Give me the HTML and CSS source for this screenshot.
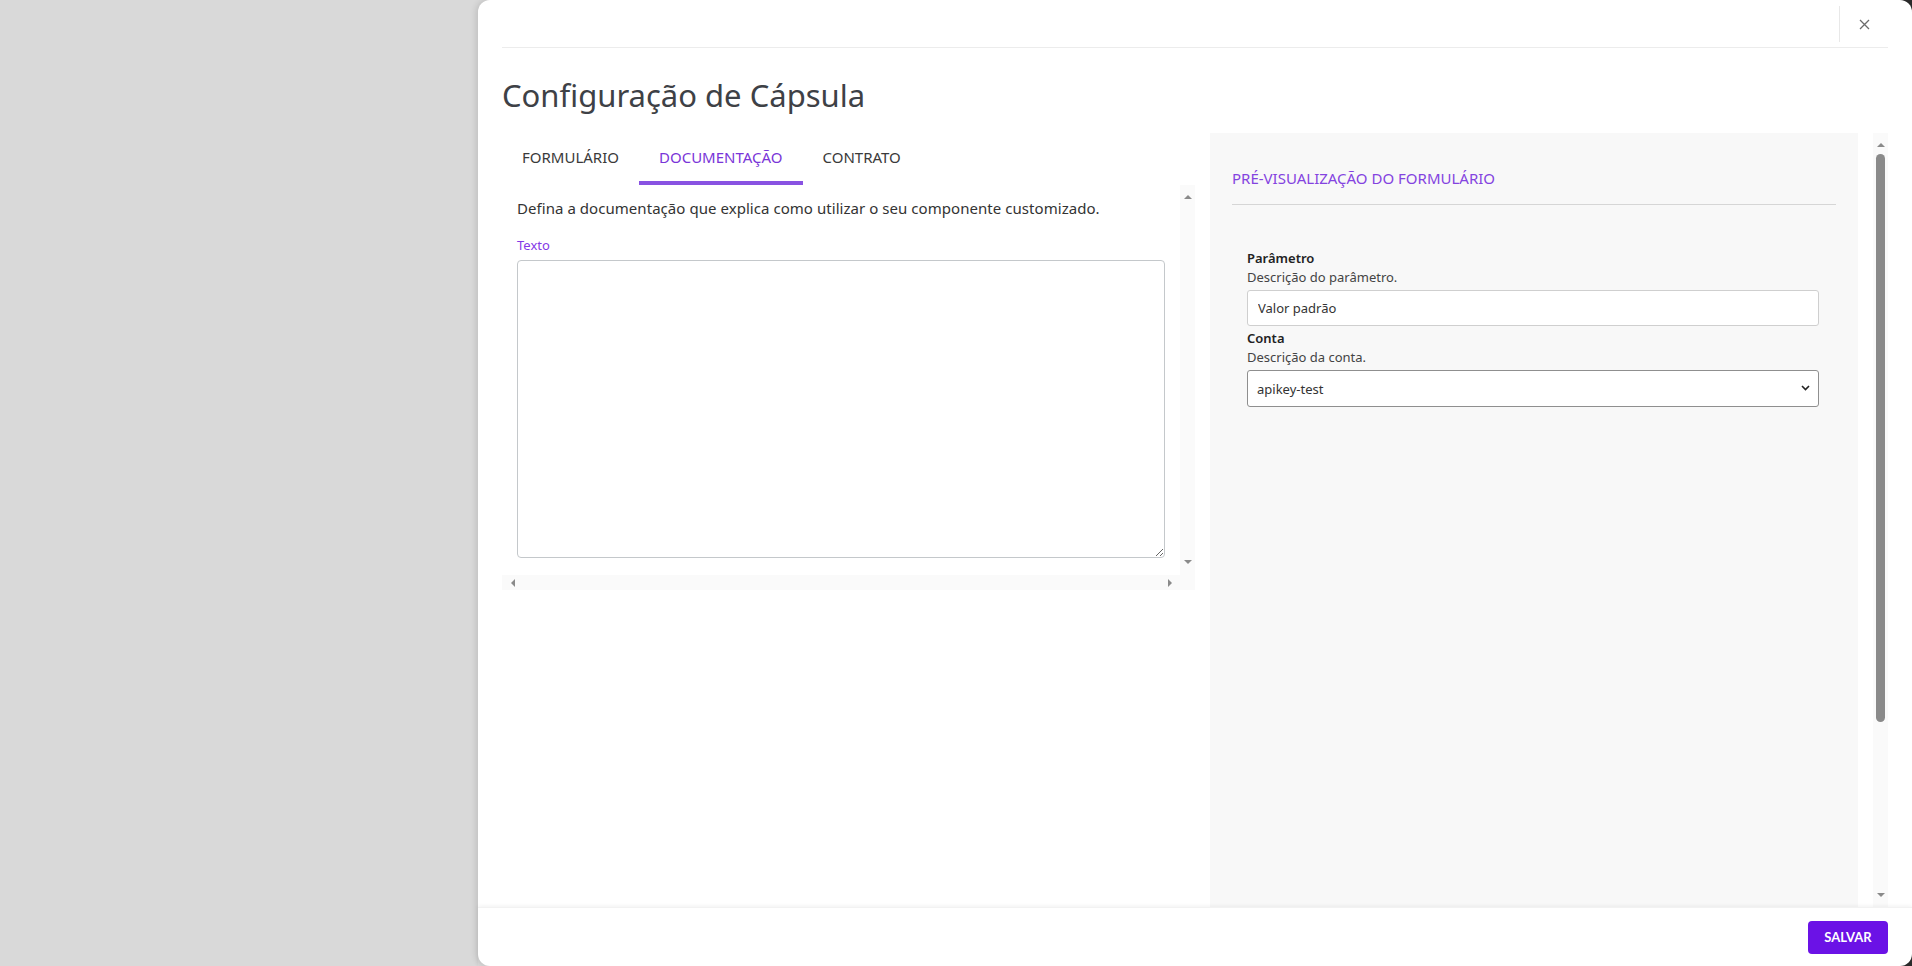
FILE: index.html
```html
<!DOCTYPE html>
<html lang="pt-BR">
<head>
<meta charset="UTF-8">
<meta name="viewport" content="width=device-width, initial-scale=1.0">
<title>Configuração de Cápsula</title>
<link rel="stylesheet" href="styles.css">
</head>
<body>
<div class="modal">
    <header class="modal-header">
        <button class="close-btn" title="Fechar">
            <svg width="11" height="11" viewBox="0 0 11 11"><path d="M1 1L10 10M10 1L1 10" stroke="#6b6b6b" stroke-width="1.3" fill="none"/></svg>
        </button>
    </header>
    <h1 class="modal-title">Configuração de Cápsula</h1>
    <div class="modal-body">
        <section class="editor">
            <nav class="tabs">
                <button class="tab">FORMULÁRIO</button>
                <button class="tab active">DOCUMENTAÇÃO</button>
                <button class="tab">CONTRATO</button>
            </nav>
            <div class="tab-panel">
                <div class="tab-content">
                    <p class="tab-hint">Defina a documentação que explica como utilizar o seu componente customizado.</p>
                    <label class="field-label" for="doc-text">Texto</label>
                    <textarea id="doc-text" class="doc-text"></textarea>
                </div>
                <div class="vbar">
                    <span class="arrow arrow-up"></span>
                    <span class="arrow arrow-down"></span>
                </div>
                <div class="hbar">
                    <span class="arrow arrow-left"></span>
                    <span class="arrow arrow-right"></span>
                </div>
                <div class="bar-corner"></div>
            </div>
        </section>
        <aside class="preview">
            <h2 class="preview-title">PRÉ-VISUALIZAÇÃO DO FORMULÁRIO</h2>
            <div class="preview-form">
                <div class="form-field">
                    <label class="form-label">Parâmetro</label>
                    <div class="form-help">Descrição do parâmetro.</div>
                    <input class="form-input" type="text" value="Valor padrão">
                </div>
                <div class="form-field">
                    <label class="form-label">Conta</label>
                    <div class="form-help">Descrição da conta.</div>
                    <div class="select-wrap">
                        <select class="form-select">
                            <option>apikey-test</option>
                        </select>
                        <svg class="select-caret" width="9" height="6" viewBox="0 0 9 6"><path d="M1 1L4.5 4.5L8 1" stroke="#222" stroke-width="1.6" fill="none"/></svg>
                    </div>
                </div>
            </div>
        </aside>
        <div class="body-scrollbar">
            <span class="arrow arrow-up"></span>
            <div class="thumb-track"><div class="thumb"></div></div>
            <span class="arrow arrow-down"></span>
        </div>
    </div>
    <footer class="modal-footer">
        <button class="save-btn">SALVAR</button>
    </footer>
</div>
</body>
</html>
```

FILE: styles.css
```css
html, body {
    height: 100%;
}
body {
    margin: 0;
    font-family: 'Noto Sans', Arial, sans-serif;
    color: #333;
    background: linear-gradient(90deg, #d9d9d9 0 1890px, #2b2b2b 1890px);
    overflow: hidden;
}
.modal {
    margin-left: 478px;
    height: 966px;
    background-color: #fff;
    border-radius: 12px;
    box-shadow: -2px 0 6px rgba(0, 0, 0, 0.12);
    display: flex;
    flex-direction: column;
}
.modal-header {
    height: 47px;
    margin: 0 24px;
    border-bottom: 1px solid #ececec;
    display: flex;
    justify-content: flex-end;
    align-items: flex-start;
}
.close-btn {
    width: 49px;
    height: 36px;
    margin-top: 6px;
    border: none;
    border-left: 1px solid #e8e8e8;
    background: none;
    padding: 0;
    display: flex;
    align-items: center;
    justify-content: center;
    cursor: pointer;
}
.modal-title {
    margin: 0 24px;
    padding: 27px 0 18px;
    font-size: 31px;
    line-height: 40px;
    font-weight: 400;
    color: #3e4146;
}
.modal-body {
    flex: 1;
    min-height: 0;
    margin: 0 24px;
    display: flex;
    gap: 15px;
    overflow: hidden;
}
.editor {
    flex: 0 0 693px;
}
.tabs {
    display: flex;
}
.tab {
    font-family: 'Noto Sans', Arial, sans-serif;
    font-size: 15px;
    line-height: 24px;
    padding: 12px 20px 12px;
    border: none;
    border-bottom: 4px solid transparent;
    background: none;
    color: #3a3a3a;
    cursor: pointer;
}
.tab.active {
    color: #7a35d8;
    border-bottom-color: #8952e2;
}

/* tab panel with its scrollbars */
.tab-panel {
    display: grid;
    grid-template-columns: 678px 15px;
    grid-template-rows: 390px 15px;
}
.tab-content {
    padding: 11px 15px 0;
    overflow: hidden;
}
.tab-hint {
    margin: 0;
    font-size: 15px;
    line-height: 24px;
    letter-spacing: 0.05px;
    color: #333;
}
.field-label {
    display: block;
    margin-top: 15px;
    font-size: 13px;
    line-height: 20px;
    color: #8439e6;
}
.doc-text {
    display: block;
    margin-top: 5px;
    width: 648px;
    height: 298px;
    box-sizing: border-box;
    border: 1px solid #c4c8cb;
    border-radius: 4px;
    font-family: 'Noto Sans', Arial, sans-serif;
}
.vbar, .hbar, .bar-corner, .body-scrollbar {
    background-color: #fafafa;
}
.vbar {
    display: flex;
    flex-direction: column;
    justify-content: space-between;
    align-items: center;
    padding: 10px 0 11px;
}
.hbar {
    display: flex;
    justify-content: space-between;
    align-items: center;
    padding: 0 8px 0 9px;
}
.arrow {
    width: 0;
    height: 0;
    border: 4px solid transparent;
}
.arrow-up {
    border-top: none;
    border-bottom-color: #8a8a8a;
}
.arrow-down {
    border-bottom: none;
    border-top-color: #8a8a8a;
}
.arrow-left {
    border-left: none;
    border-right-color: #8a8a8a;
}
.arrow-right {
    border-right: none;
    border-left-color: #8a8a8a;
}

/* preview */
.preview {
    flex: 1;
    background-color: #f8f8f8;
    padding: 0 22px;
}
.preview-title {
    margin: 0;
    padding: 34px 0 15px;
    border-bottom: 1px solid #d6d6d6;
    font-size: 15px;
    line-height: 22px;
    font-weight: 400;
    color: #8443e0;
}
.preview-form {
    padding: 44px 17px 0 15px;
}
.form-field {
    margin-bottom: 3px;
}
.form-label {
    display: block;
    font-size: 13px;
    line-height: 19px;
    font-weight: 600;
    color: #222;
}
.form-help {
    font-size: 13px;
    line-height: 19px;
    color: #444;
    margin-bottom: 3px;
}
.form-input, .form-select {
    display: block;
    width: 100%;
    box-sizing: border-box;
    font-family: 'Noto Sans', Arial, sans-serif;
    font-size: 13px;
    color: #333;
    background-color: #fff;
    border-radius: 3px;
}
.form-input {
    height: 36px;
    padding: 0 10px;
    border: 1px solid #cfcfcf;
}
.select-wrap {
    position: relative;
}
.form-select {
    height: 37px;
    padding: 0 9px;
    border: 1px solid #8f8f8f;
    appearance: none;
}
.select-caret {
    position: absolute;
    right: 9px;
    top: 15px;
    pointer-events: none;
}

/* outer scrollbar */
.body-scrollbar {
    flex: 0 0 15px;
    display: flex;
    flex-direction: column;
    align-items: center;
    margin-left: 0;
}
.body-scrollbar .arrow-up {
    margin-top: 10px;
}
.body-scrollbar .arrow-down {
    margin-bottom: 10px;
}
.thumb-track {
    flex: 1;
    width: 100%;
    padding: 7px 3px;
    box-sizing: border-box;
}
.thumb {
    height: 568px;
    background-color: #8a8a8a;
    border-radius: 5px;
}

.modal-footer {
    height: 58px;
    flex: 0 0 58px;
    padding: 0 24px;
    display: flex;
    justify-content: flex-end;
    align-items: center;
    box-shadow: 0 -1px 4px rgba(0, 0, 0, 0.06);
    border-top: 1px solid #f2f2f2;
    position: relative;
}
.save-btn {
    width: 80px;
    height: 33px;
    background-color: #6b12e6;
    color: #fff;
    border: none;
    border-radius: 4px;
    font-family: 'Lato', Arial, sans-serif;
    font-weight: 700;
    font-size: 13px;
    cursor: pointer;
}
```
